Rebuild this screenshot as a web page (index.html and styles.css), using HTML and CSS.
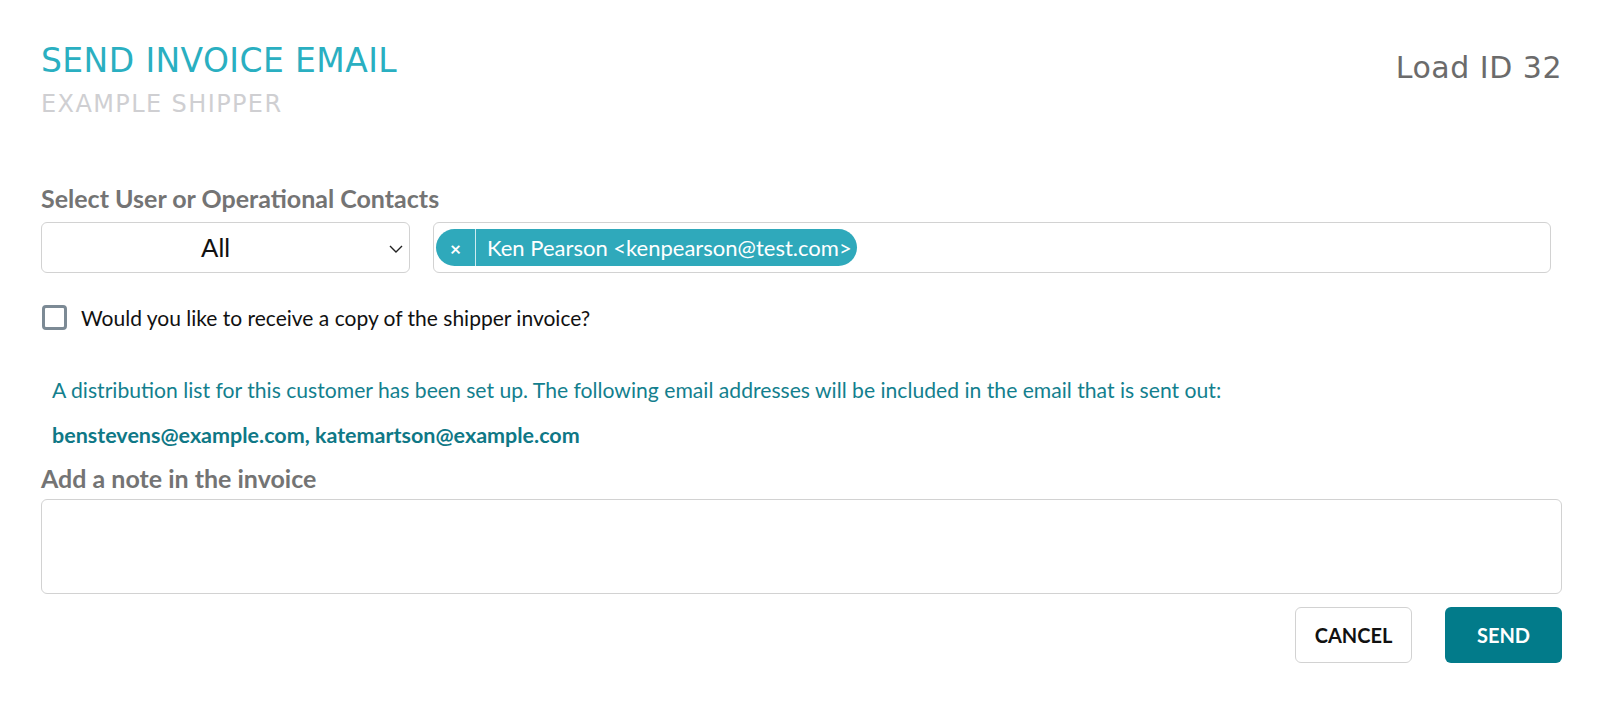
FILE: index.html
```html
<!DOCTYPE html>
<html lang="en">
<head>
    <meta charset="UTF-8">
    <meta name="viewport" content="width=device-width, initial-scale=1.0">
    <title>Send Invoice Email</title>
    <link rel="stylesheet" href="styles.css">
</head>
<body>
    <div class="modal">
        <header class="modal-header">
            <div>
                <h1 class="title">SEND INVOICE EMAIL</h1>
                <div class="subtitle">EXAMPLE SHIPPER</div>
            </div>
            <div class="load-id">Load ID 32</div>
        </header>

        <label class="field-label">Select User or Operational Contacts</label>
        <div class="contacts-row">
            <div class="select-wrap">
                <select class="contact-type">
                    <option>All</option>
                    <option>Users</option>
                    <option>Operational Contacts</option>
                </select>
                <svg class="chevron" width="14" height="8" viewBox="0 0 14 8">
                    <path d="M1 1 L7 7 L13 1" fill="none" stroke="#222" stroke-width="1.4"/>
                </svg>
            </div>
            <div class="tag-input">
                <span class="chip">
                    <span class="chip-remove">&times;</span>
                    <span class="chip-text">Ken Pearson &lt;kenpearson@test.com&gt;</span>
                </span>
            </div>
        </div>

        <label class="check-row">
            <input type="checkbox" class="check">
            <span>Would you like to receive a copy of the shipper invoice?</span>
        </label>

        <p class="dist-note">A distribution list for this customer has been set up. The following email addresses will be included in the email that is sent out:</p>
        <p class="dist-emails">benstevens@example.com, katemartson@example.com</p>

        <label class="field-label note-label" for="note">Add a note in the invoice</label>
        <textarea id="note" class="note"></textarea>

        <div class="actions">
            <button class="btn btn-cancel">CANCEL</button>
            <button class="btn btn-send">SEND</button>
        </div>
    </div>
</body>
</html>
```

FILE: styles.css
```css
body {
    margin: 0;
    background: #fff;
    font-family: Lato, "Open Sans", sans-serif;
}
.modal {
    padding: 41px 38px 0 41px;
}
.modal-header {
    display: flex;
    justify-content: space-between;
    align-items: flex-start;
    height: 142px;
}
.title {
    margin: 0;
    font-family: "DejaVu Sans", sans-serif;
    font-weight: normal;
    font-size: 33px;
    line-height: 40px;
    letter-spacing: 0.4px;
    color: #2aafc1;
}
.subtitle {
    margin-top: 9px;
    font-family: "DejaVu Sans", sans-serif;
    font-size: 24px;
    line-height: 28px;
    letter-spacing: 1.4px;
    color: #cfcfd2;
}
.load-id {
    margin-top: 9px;
    font-family: "DejaVu Sans", sans-serif;
    font-size: 30px;
    line-height: 36px;
    letter-spacing: 0.5px;
    color: #6b6b6b;
}
.field-label {
    display: block;
    font-weight: bold;
    font-size: 25px;
    line-height: 30px;
    color: #747474;
}
.contacts-row {
    display: flex;
    gap: 23px;
    margin-top: 9px;
}
.select-wrap {
    position: relative;
    width: 369px;
    flex: none;
}
.contact-type {
    appearance: none;
    -webkit-appearance: none;
    width: 100%;
    height: 51px;
    padding: 0 20px 0 0;
    border: 1.5px solid #d2d2d2;
    border-radius: 6px;
    background: #fff;
    font-family: "Liberation Sans", Arial, sans-serif;
    font-size: 26px;
    color: #111;
    text-align: center;
    text-align-last: center;
}
.chevron {
    position: absolute;
    right: 7px;
    top: 23px;
    pointer-events: none;
}
.tag-input {
    flex: 1;
    height: 51px;
    margin-right: 11px;
    box-sizing: border-box;
    border: 1.5px solid #d2d2d2;
    border-radius: 6px;
    padding: 6px 2px;
    display: flex;
    align-items: center;
}
.chip {
    display: inline-flex;
    align-items: center;
    height: 37px;
    background: #2fa9bb;
    border-radius: 19px;
    color: #fff;
    font-size: 22px;
}
.chip-remove {
    width: 40px;
    height: 37px;
    box-sizing: border-box;
    text-align: center;
    font-size: 19px;
    font-weight: bold;
    line-height: 40px;
    border-right: 1.5px solid #cdebf0;
}
.chip-text {
    padding: 0 5px 0 11px;
}
.check-row {
    display: flex;
    align-items: center;
    gap: 14px;
    margin-top: 32px;
    font-size: 21px;
    line-height: 25px;
    color: #111;
}
.check {
    appearance: none;
    -webkit-appearance: none;
    margin: 0 0 0 1px;
    width: 25px;
    height: 25px;
    border: 3px solid #7c8a95;
    border-radius: 4px;
    box-sizing: border-box;
}
.dist-note {
    margin: 47px 0 0 11px;
    font-size: 21.15px;
    line-height: 26px;
    color: #137f8e;
}
.dist-emails {
    margin: 19px 0 0 11px;
    font-size: 21.5px;
    line-height: 26px;
    font-weight: bold;
    color: #0f7886;
}
.note-label {
    margin-top: 15px;
}
.note {
    display: block;
    width: 100%;
    height: 95px;
    box-sizing: border-box;
    margin-top: 6px;
    border: 1.5px solid #d2d2d2;
    border-radius: 6px;
    resize: none;
}
.actions {
    display: flex;
    justify-content: flex-end;
    gap: 33px;
    margin-top: 13px;
}
.btn {
    width: 117px;
    height: 56px;
    border-radius: 6px;
    font-family: Lato, sans-serif;
    font-weight: bold;
    font-size: 20px;
    cursor: pointer;
}
.btn-cancel {
    background: #fff;
    border: 1.5px solid #d2d2d2;
    color: #111;
}
.btn-send {
    background: #027b8a;
    border: none;
    color: #fff;
}
```
